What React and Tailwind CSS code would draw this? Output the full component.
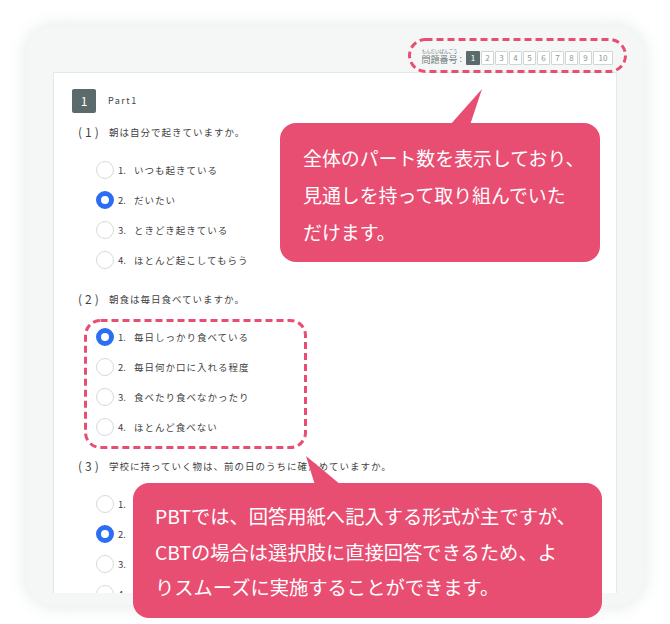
const jp = "font-['Noto_Sans_CJK_JP',sans-serif]";

const questions = [
  {
    no: 1,
    text: '朝は自分で起きていますか。',
    options: ['いつも起きている', 'だいたい', 'ときどき起きている', 'ほとんど起こしてもらう'],
    checked: 1,
  },
  {
    no: 2,
    text: '朝食は毎日食べていますか。',
    options: ['毎日しっかり食べている', '毎日何か口に入れる程度', '食べたり食べなかったり', 'ほとんど食べない'],
    checked: 0,
  },
  {
    no: 3,
    text: '学校に持っていく物は、前の日のうちに確かめていますか。',
    options: ['いつも', 'だいたい', 'ときどき', 'ほとんど'],
    checked: 1,
  },
];

function Radio({ checked }) {
  if (checked) {
    return <span className="block w-[18px] h-[18px] rounded-full border-[5px] border-[#2b6ef2] bg-white shrink-0" />;
  }
  return <span className="block w-[18px] h-[18px] rounded-full border border-[#d5dbdb] bg-white shrink-0" />;
}

function Question({ q }) {
  return (
    <div className="mb-[14px]">
      <div className="flex items-center h-[20px] pl-[6px]">
        <span className="w-[31px] text-[12px] tracking-[3px] text-[#444]">({q.no})</span>
        <span className="text-[9.5px] tracking-[1px] text-[#3f3f3f]">{q.text}</span>
      </div>
      <div className="mt-[13px] pl-[24px]">
        {q.options.map((opt, i) => (
          <div key={i} className="flex items-center h-[30px]">
            <Radio checked={i === q.checked} />
            <span className="ml-[4px] w-[16px] text-[9.5px] text-[#3f3f3f]">{i + 1}.</span>
            <span className="text-[9.5px] tracking-[1px] text-[#3f3f3f]">{opt}</span>
          </div>
        ))}
      </div>
    </div>
  );
}

function Pager() {
  return (
    <div className="flex items-end">
      <div className="flex flex-col items-center">
        <span className="text-[4.5px] leading-[6px] text-[#6f7b7b] whitespace-nowrap">もんだいばんごう</span>
        <span className="text-[9px] leading-[11px] text-[#6f7b7b]">問題番号</span>
      </div>
      <span className="text-[9px] text-[#6f7b7b] leading-[11px] ml-[2px] mr-[4px] mb-[1px]">:</span>
      <div className="flex gap-px">
        {[1, 2, 3, 4, 5, 6, 7, 8, 9, 10].map((n) =>
          n === 1 ? (
            <span key={n} className="w-[14px] h-[14px] flex items-center justify-center bg-[#5b6b6b] text-white text-[8px] rounded-[1px]">
              {n}
            </span>
          ) : (
            <span
              key={n}
              className={`${n === 10 ? 'w-[20px]' : 'w-[13px]'} h-[14px] flex items-center justify-center bg-white border border-[#cfd6d6] text-[#8a9696] text-[8px] rounded-[1px]`}
            >
              {n}
            </span>
          )
        )}
      </div>
    </div>
  );
}

function DashBox({ className, w, h, r }) {
  return (
    <svg className={`absolute ${className}`} width={w} height={h}>
      <rect x="1.5" y="1.5" width={w - 3} height={h - 3} rx={r} fill="none" stroke="#e84e72" strokeWidth="3" strokeDasharray="7 4" />
    </svg>
  );
}

export default function App() {
  return (
    <div className={`relative w-[670px] h-[624px] bg-white overflow-hidden pt-[27px] pl-[27px] ${jp}`}>
      <div className="w-[616px] h-[578px] rounded-[28px] bg-[#f5f7f7] shadow-[0_0_14px_6px_rgba(236,241,241,0.9)] flex flex-col">
        <div className="h-[45px] flex justify-end items-end pb-[7px] pr-[30px]">
          <Pager />
        </div>
        <div className="mx-[26px] h-[521px] bg-white border border-[#e3e8e8] border-b-0 overflow-hidden px-[18px] pt-[16px]">
          <div className="flex items-center">
            <span className="w-[24px] h-[24px] flex items-center justify-center bg-[#5b6b6b] text-white text-[12px] rounded-[2px]">1</span>
            <span className="ml-[12px] text-[9px] tracking-[1.5px] text-[#444]">Part1</span>
          </div>
          <div className="mt-[9px]">
            {questions.map((q) => (
              <Question key={q.no} q={q} />
            ))}
          </div>
        </div>
      </div>

      <DashBox className="left-[408px] top-[38px]" w={219} h={35} r={16} />
      <DashBox className="left-[84px] top-[319px]" w={223} h={130} r={15} />

      <div className="absolute left-[280px] top-[123px] w-[320px] h-[139px] rounded-[16px] bg-[#e84e72] pl-[23px] pt-[16px] text-white text-[18.9px] leading-[37px] font-normal">
        <svg className="absolute left-[168px] top-[-35px]" width="36" height="37">
          <polygon points="2,37 22,37 34,1" fill="#e84e72" />
        </svg>
        全体のパート数を表示しており、
        <br />
        見通しを持って取り組んでいた
        <br />
        だけます。
      </div>

      <div className="absolute left-[133px] top-[483px] w-[469px] h-[135px] rounded-[16px] bg-[#e84e72] pl-[22px] pt-[16px] text-white text-[19.3px] leading-[35.5px] font-normal">
        <svg className="absolute left-[170px] top-[-28px]" width="40" height="30">
          <polygon points="3,1 12,30 38,30" fill="#e84e72" />
        </svg>
        PBTでは、回答用紙へ記入する形式が主ですが、
        <br />
        CBTの場合は選択肢に直接回答できるため、よ
        <br />
        りスムーズに実施することができます。
      </div>
    </div>
  );
}
